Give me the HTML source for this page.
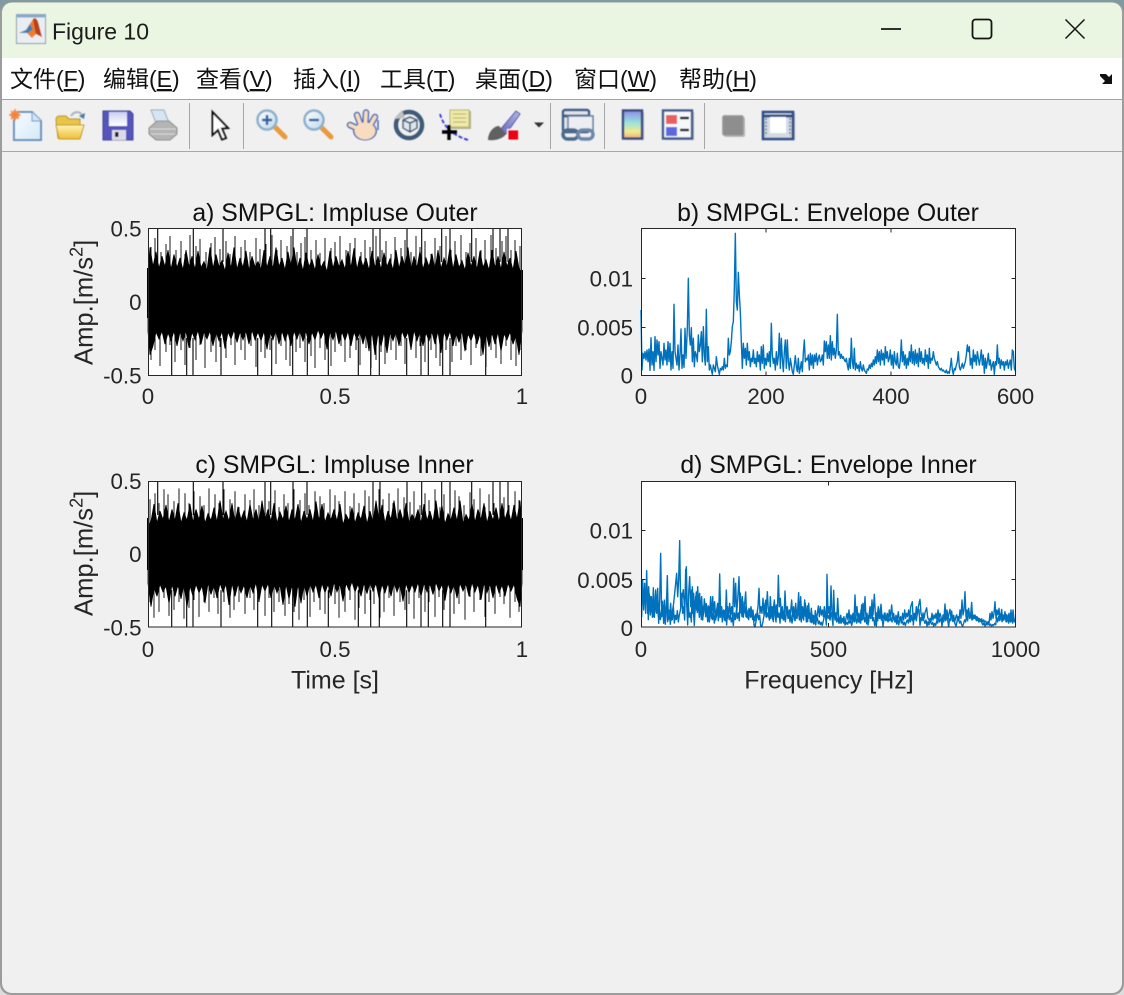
<!DOCTYPE html>
<html><head><meta charset="utf-8"><title>Figure 10</title>
<style>
html,body{margin:0;padding:0;background:#f0f0f0;width:1124px;height:995px;overflow:hidden}
svg{display:block}
text{font-family:"Liberation Sans","Noto Sans CJK SC",sans-serif}
.t{font-size:24.8px;fill:#111;text-anchor:middle}
.k{font-size:22.3px;fill:#262626}
.m{font-size:23px;fill:#111}
.e{text-anchor:end}
.c{text-anchor:middle}
.l{font-size:25px;fill:#262626;text-anchor:middle}
.tr{fill:none;stroke:#0072bd;stroke-width:4.2;stroke-linejoin:round}
</style></head><body>
<svg width="1124" height="995" viewBox="0 0 1124 995" xmlns="http://www.w3.org/2000/svg">
<defs>
<filter id="soft" x="-5%" y="-5%" width="110%" height="110%"><feGaussianBlur stdDeviation=".45"/></filter>
<clipPath id="dclip"><rect x="213" y="90" width="1124" height="445"/></clipPath>
<linearGradient id="cb" x1="0" y1="0" x2="0" y2="1"><stop offset="0" stop-color="#8d8de8"/><stop offset=".45" stop-color="#9ce4dc"/><stop offset=".75" stop-color="#f4e890"/><stop offset="1" stop-color="#ecb070"/></linearGradient>
<linearGradient id="fo" x1="0" y1="0" x2="0" y2="1"><stop offset="0" stop-color="#fff4b4"/><stop offset="1" stop-color="#eebe34"/></linearGradient>
<linearGradient id="lens" x1="0" y1="0" x2="1" y2="1"><stop offset="0" stop-color="#fff"/><stop offset="1" stop-color="#bcd8ec"/></linearGradient>
<linearGradient id="lab" x1="0" y1="0" x2="0" y2="1"><stop offset="0" stop-color="#ccd0f0"/><stop offset="1" stop-color="#fff"/></linearGradient>
<linearGradient id="doc" x1="0" y1="0" x2="1" y2="1"><stop offset="0" stop-color="#f8fcff"/><stop offset="1" stop-color="#d4e8f8"/></linearGradient>
<linearGradient id="bh" x1="1" y1="0" x2="0" y2="1"><stop offset="0" stop-color="#b4b8e8"/><stop offset="1" stop-color="#6268b8"/></linearGradient>
<g id="band">
<path transform="translate(0 301.800) scale(1 .88) translate(0 -301.800)" fill="#000" stroke="#000" stroke-width=".8" d="M148,268 150,240 153,262 156,245 159,264 162,250 165,262 168,243 171,265 174,248 177,263 180,252 183,266 186,243 189,262 192,250 195,265 198,244 201,263 204,256 207,266 210,240 213,264 216,248 219,262 222,255 225,267 228,246 231,264 234,240 237,265 240,252 243,263 246,244 249,266 252,250 255,262 258,256 261,265 264,243 267,263 270,250 273,264 276,240 279,262 282,252 285,266 288,245 291,263 294,240 297,265 300,252 303,267 306,246 309,262 312,254 315,266 318,248 321,263 324,256 327,268 330,244 333,264 336,250 339,262 342,254 345,265 348,244 351,263 354,241 357,265 360,250 363,262 366,252 369,266 372,244 375,263 378,250 381,265 384,246 387,262 390,253 393,266 396,243 399,264 402,250 405,262 408,240 411,266 414,250 417,263 420,244 423,265 426,252 429,262 432,247 435,266 438,243 441,264 444,252 447,262 450,240 453,265 456,248 459,263 462,255 465,266 468,246 471,262 474,250 477,265 480,244 483,263 486,254 489,266 492,243 495,263 498,250 501,265 504,245 507,262 510,252 513,266 516,244 519,264 522,268 522,335 519,362 516,340 513,350 510,336 507,345 504,338 501,358 498,336 495,350 492,337 489,353 486,336 483,362 480,338 477,350 474,336 471,346 468,338 465,358 462,335 459,348 456,337 453,352 450,335 447,345 444,336 441,360 438,335 435,350 432,336 429,346 426,337 423,352 420,336 417,346 414,334 411,356 408,336 405,344 402,335 399,352 396,336 393,346 390,337 387,360 384,336 381,353 378,337 375,362 372,336 369,358 366,336 363,350 360,335 357,345 354,336 351,352 348,335 345,346 342,336 339,350 336,334 333,345 330,336 327,356 324,335 321,343 318,333 315,345 312,336 309,350 306,335 303,347 300,334 297,344 294,335 291,352 288,336 285,346 282,335 279,350 276,334 273,345 270,336 267,356 264,335 261,346 258,336 255,345 252,334 249,350 246,335 243,345 240,336 237,348 234,334 231,344 228,336 225,355 222,335 219,346 216,336 213,352 210,335 207,344 204,336 201,350 198,334 195,345 192,336 189,354 186,335 183,346 180,336 177,352 174,335 171,346 168,337 165,350 162,335 159,344 156,336 153,352 150,362 148,335Z"/>
<path fill="none" stroke="#000" stroke-width=".9" d="M151 247V272M155 238V272M161 252V272M166 244V272M170 236V272M176 250V272M181 241V272M185 254V272M190 235V272M196 246V272M200 239V272M206 252V272M211 243V272M215 237V272M220 249V272M226 241V272M230 254V272M235 236V272M241 247V272M245 240V272M250 252V272M256 238V272M260 249V272M266 244V272M272 235V272M277 250V272M281 240V272M287 246V272M291 236V272M297 252V272M301 243V272M305 237V272M311 250V272M316 240V272M320 253V272M325 238V272M331 248V272M335 242V272M340 236V272M346 250V272M350 243V272M355 238V272M361 252V272M365 240V272M370 247V272M376 236V272M382 250V272M386 241V272M391 254V272M395 237V272M401 248V272M405 240V272M411 252V272M416 236V272M420 247V272M425 241V272M431 254V272M435 238V272M440 246V272M446 236V272M451 250V272M455 241V272M461 235V272M466 252V272M470 243V272M476 238V272M481 250V272M485 240V272M491 235V272M496 248V272M502 241V272M506 236V272M511 250V272M515 240V272M520 246V272M151 332V360M155 332V350M160 332V366M166 332V352M170 332V345M175 332V362M181 332V350M185 332V365M190 332V348M196 332V360M200 332V345M205 332V368M211 332V352M216 332V362M220 332V347M226 332V358M231 332V345M235 332V365M241 332V350M245 332V360M251 332V346M256 332V367M261 332V352M265 332V358M270 332V350M276 332V364M281 332V346M286 332V360M290 332V366M296 332V352M300 332V348M305 332V362M311 332V356M315 332V368M320 332V348M325 332V360M331 332V366M335 332V352M341 332V346M345 332V362M350 332V358M356 332V350M360 332V365M366 332V348M371 332V368M376 332V360M381 332V352M385 332V364M391 332V350M396 332V360M401 332V346M405 332V364M411 332V350M416 332V358M420 332V346M425 332V362M431 332V350M436 332V358M440 332V366M446 332V350M452 332V362M456 332V346M461 332V360M466 332V350M471 332V365M476 332V348M481 332V356M486 332V367M491 332V350M496 332V358M501 332V364M506 332V346M511 332V360M516 332V366M520 332V350"/>
</g>
<path id="spikes" fill="none" stroke="#000" stroke-width="1.100" d="M157.700 228V262M193.300 228V262M223 228V262M265 228V262M270.700 228V262M293 228V262M307 228V262M373 228V262M380 228V262M407 228V262M421.700 228V262M441.700 228V262M450 228V262M471.700 228V262M493 228V262M500 228V262M508 228V262M171.700 338V375M186.700 338V375M193 338V375M221 338V375M257.700 338V375M271.700 338V375M292.700 338V375M307.300 338V375M328.300 338V375M358.300 338V375M370.700 338V375M379.300 338V375M406.700 338V375M421 338V375M428.300 338V375M442.700 338V375M450 338V375M485.700 338V375"/>
</defs>

<!-- window -->
<rect width="1124" height="995" fill="#7f9aa0"/>
<rect y="970" width="1124" height="25" fill="#dcdcdc"/>
<rect x="0" y="2" width="1124" height="993" rx="11" fill="#9c9c9c"/>
<path d="M12 2.500H1112a10 10 0 0 1 10 10V58H2V12.500a10 10 0 0 1 10-10Z" fill="#eaf6e2"/>
<rect x="2" y="58" width="1120" height="41" fill="#fff"/>
<rect x="2" y="99" width="1120" height="1" fill="#a3a3a3"/>
<path d="M2 100H1122V983a10 10 0 0 1-10 10H12a10 10 0 0 1-10-10Z" fill="#f0f0f0"/>
<rect x="2" y="151" width="1120" height="1" fill="#a8a8a8"/>

<!-- title bar -->
<g filter="url(#soft)">
<rect x="16.500" y="14.500" width="29" height="29" fill="#e9eef2" stroke="#8a9aa6"/>
<rect x="16" y="14" width="30" height="3.500" fill="#8aa8c8"/>
<path d="M19 33l7-3 7-11c2-2 4 0 5 3l4 15-6-3-4 4-5-5Z" fill="#ef7d22"/>
<path d="M19 33l7-3 4-6 3 5-5 4Z" fill="#3c7fb8"/>
<path d="M33 19c2-2 4 0 5 3l4 15-6-3Z" fill="#b8401e"/>
</g>
<text x="52" y="39.500" font-size="23" fill="#1c1c1c" textLength="97">Figure 10</text>
<path d="M881 29H901" stroke="#151515" stroke-width="1.800"/>
<rect x="972.500" y="19.500" width="19" height="19" rx="3" fill="none" stroke="#151515" stroke-width="1.800"/>
<path d="M1065.500 19.500L1084.500 38.500M1084.500 19.500L1065.500 38.500" stroke="#151515" stroke-width="1.500"/>

<!-- menu -->
<text class="m" x="10" y="87">文件(<tspan text-decoration="underline">F</tspan>)</text>
<text class="m" x="103" y="87">编辑(<tspan text-decoration="underline">E</tspan>)</text>
<text class="m" x="196" y="87">查看(<tspan text-decoration="underline">V</tspan>)</text>
<text class="m" x="293" y="87">插入(<tspan text-decoration="underline">I</tspan>)</text>
<text class="m" x="380" y="87">工具(<tspan text-decoration="underline">T</tspan>)</text>
<text class="m" x="475" y="87">桌面(<tspan text-decoration="underline">D</tspan>)</text>
<text class="m" x="574" y="87">窗口(<tspan text-decoration="underline">W</tspan>)</text>
<text class="m" x="679" y="87">帮助(<tspan text-decoration="underline">H</tspan>)</text>
<path d="M1100 74h6l3 3 3-3v10h-10l3-3-5-5Z" fill="#111"/>

<!-- toolbar separators -->
<path d="M189.500 103V149M243.500 103V149M550.500 103V149M604.500 103V149M704.500 103V149" stroke="#a6a6a6" stroke-width="1"/>

<g filter="url(#soft)">
<!-- new -->
<path d="M14 112H32L41 121V140H14Z" fill="url(#doc)" stroke="#6a90bc" stroke-width="2"/>
<path d="M32 112V121H41" fill="#cfe4f4" stroke="#6a90bc"/>
<circle cx="15" cy="115" r="4.500" fill="#f59a4a"/>
<path d="M9 115H21M15 109V121M11 111L19 119M19 111L11 119" stroke="#f08040" stroke-width="1.200"/>
<!-- open -->
<path d="M56 120Q56 116 60 116H66L69 119H80V138H58Z" fill="#e8c448" stroke="#b89428"/>
<path d="M56 125H84L80 139H59Z" fill="url(#fo)" stroke="#c09a28" stroke-linejoin="round"/>
<path d="M71 116C74 111 80 111 82 115" fill="none" stroke="#a8b4c4" stroke-width="2"/>
<path d="M85 113L84 119 79 116Z" fill="#4878a8"/>
<!-- save -->
<path d="M103 111H130L133 114V140H103Z" fill="#5555bc" stroke="#3c4890"/>
<rect x="109" y="112" width="18" height="14" fill="url(#lab)"/>
<rect x="112" y="130" width="14" height="10" fill="#dcdce8"/>
<rect x="115" y="132" width="3.500" height="5" fill="#222"/>
<!-- print -->
<path d="M151 110H164L169 123H156Z" fill="#d4e6f4" stroke="#9aa8b4"/>
<path d="M149 128L157 121H169L177 128V134L170 140H156L149 134Z" fill="#b4b4b4" stroke="#8c8c8c"/>
<path d="M150 129H176M151 134H175" stroke="#dcdcdc"/>
<!-- arrow -->
<path d="M212.500 112V135L218 130 222 139.500 226 138 222 128.500 228 128Z" fill="#fff" stroke="#111" stroke-width="2"/>
<!-- zoom in -->
<path d="M275 127L285 137" stroke="#e89a3c" stroke-width="5" stroke-linecap="round"/>
<circle cx="267" cy="120" r="9.500" fill="url(#lens)" stroke="#8cb0cc" stroke-width="2.500"/>
<path d="M262 120H272M267 115V125" stroke="#2f5f9c" stroke-width="2.400"/>
<!-- zoom out -->
<path d="M321 127L331 137" stroke="#e89a3c" stroke-width="5" stroke-linecap="round"/>
<circle cx="314" cy="120" r="9.500" fill="url(#lens)" stroke="#8cb0cc" stroke-width="2.500"/>
<path d="M309 120H319" stroke="#2f5f9c" stroke-width="2.400"/>
<!-- hand -->
<path d="M363 131L350 125M363 131L357 115M365 131L366 112.500M367 131L375 117" stroke="#4c6cb0" stroke-width="6.500" stroke-linecap="round"/>
<ellipse cx="365" cy="131" rx="12" ry="9.500" fill="#4c6cb0"/>
<path d="M363 131L350 125M363 131L357 115M365 131L366 112.500M367 131L375 117" stroke="#f8dcc0" stroke-width="3.600" stroke-linecap="round"/>
<ellipse cx="365" cy="131" rx="10.500" ry="8.500" fill="#f8dcc0"/>
<path d="M378 120V130" stroke="#4c6cb0" stroke-width="1.500"/>
<!-- rotate -->
<circle cx="409" cy="125" r="13" fill="#f0f0f0" stroke="#3c5a78" stroke-width="4.500"/>
<path d="M394 119L402 110 405 118Z" fill="#c0c0c0"/>
<path d="M403 120L410 117 417 120V128L410 132 403 128ZM403 120L410 123 417 120M410 123V132" fill="#dfe6ea" stroke="#3c5a78" stroke-width="1.500"/>
<!-- data cursor -->
<rect x="451" y="111" width="20" height="18" fill="#b4b488"/>
<rect x="450" y="110" width="19" height="17" fill="#efe9a4" stroke="#b4b47c"/>
<path d="M453 114H466M453 118H466M453 122H466" stroke="#b0b080"/>
<path d="M440 114C443 124 449 134 468 140" fill="none" stroke="#3434d8" stroke-width="1.800" stroke-dasharray="4 2"/>
<path d="M442 132H457M449 125V140" stroke="#000" stroke-width="3.400"/>
<!-- brush -->
<path d="M500 130L516 111 520 114 506 134Z" fill="url(#bh)" stroke="#5458a0"/>
<path d="M488 140C488 132 494 126 499 126L506 134C503 139 494 141 488 140Z" fill="#606060"/>
<rect x="507" y="129" width="12" height="12" fill="#fff"/>
<rect x="508" y="130" width="10.500" height="10" fill="#f00014"/>
<path d="M534 122.500H544L539 127.500Z" fill="#333"/>
<!-- link -->
<rect x="563" y="110" width="26" height="22" rx="2" fill="#dfe4ea" stroke="#3f5c88" stroke-width="2.400"/>
<path d="M563 116H589" stroke="#3f5c88" stroke-width="3"/>
<rect x="568" y="116" width="25" height="15" fill="#eceef2" stroke="#5f7c9c" stroke-width="1.500"/>
<rect x="563" y="130" width="15" height="9" rx="4.500" fill="none" stroke="#4c6a8c" stroke-width="3.400"/>
<rect x="578" y="130" width="15" height="9" rx="4.500" fill="none" stroke="#6c88a8" stroke-width="3.400"/>
<!-- colorbar -->
<rect x="625" y="112" width="19" height="28" fill="#aab0bc"/>
<rect x="623" y="110.500" width="19" height="28" fill="url(#cb)" stroke="#3a4a80" stroke-width="2.400"/>
<!-- legend -->
<rect x="665" y="112" width="29" height="28" fill="#aab0bc"/>
<rect x="663" y="110.500" width="29" height="28" fill="#f6f8fc" stroke="#3f5a88" stroke-width="2.400"/>
<rect x="666" y="115" width="11" height="9" fill="#e86060"/>
<rect x="666" y="127" width="11" height="9" fill="#5c68e0"/>
<path d="M680 118H689M680 130H689" stroke="#222" stroke-width="2.400"/>
<!-- plot box gray -->
<rect x="724" y="117" width="21" height="20" rx="2" fill="#b8b8b8"/>
<rect x="722.500" y="115.500" width="21" height="20" rx="2" fill="#8e8e8e" stroke="#a8a8a8"/>
<!-- plot tools -->
<rect x="765" y="113" width="30" height="27" fill="#aab0bc"/>
<rect x="763" y="112" width="30" height="27" fill="#d4dbe4" stroke="#2f4f88" stroke-width="2.600"/>
<path d="M763 116H793" stroke="#2f4f88" stroke-width="3"/>
<rect x="770" y="117" width="16" height="16" fill="#fff"/>
<path d="M766 118V136M790 118V136" stroke="#8090a8" stroke-width="2" stroke-dasharray="2 1.500"/>
</g>

<!-- PLOT A -->
<rect x="148.500" y="228.500" width="373" height="147" fill="#fff"/>
<use href="#spikes"/><use href="#band"/>
<rect x="147" y="268" width="2" height="50" fill="#000"/><rect x="521" y="270" width="2" height="50" fill="#000"/>
<rect x="148.500" y="228.500" width="373" height="147" fill="none" stroke="#262626"/>
<text class="t" x="335" y="221">a) SMPGL: Impluse Outer</text>
<text class="k e" x="141.500" y="236.500">0.5</text>
<text class="k e" x="141.500" y="310">0</text>
<text class="k e" x="141.500" y="383.500">-0.5</text>
<text class="k c" x="148" y="404">0</text><text class="k c" x="335" y="404">0.5</text><text class="k c" x="522" y="404">1</text>
<text x="0" y="0" font-size="25.600" fill="#262626" transform="translate(92.500 365) rotate(-90)">Amp.[m/s<tspan dy="-10" font-size="18">2</tspan><tspan dy="10">]</tspan></text>

<!-- PLOT C -->
<rect x="148.500" y="481.500" width="373" height="145.500" fill="#fff"/>
<g transform="translate(0 256.050) scale(1 .9884)"><use href="#spikes"/></g>
<g transform="translate(670 256.050) scale(-1 .9884)"><use href="#band"/></g>
<rect x="147" y="518" width="2" height="52" fill="#000"/><rect x="521" y="518" width="2" height="52" fill="#000"/>
<rect x="148.500" y="481.500" width="373" height="145.500" fill="none" stroke="#262626"/>
<text class="t" x="334.500" y="473">c) SMPGL: Impluse Inner</text>
<text class="k e" x="141.500" y="489">0.5</text>
<text class="k e" x="141.500" y="562">0</text>
<text class="k e" x="141.500" y="635.500">-0.5</text>
<text class="k c" x="148" y="657">0</text><text class="k c" x="335" y="657">0.5</text><text class="k c" x="522" y="657">1</text>
<text x="0" y="0" font-size="25.600" fill="#262626" transform="translate(92.500 616) rotate(-90)">Amp.[m/s<tspan dy="-10" font-size="18">2</tspan><tspan dy="10">]</tspan></text>
<text class="l" x="335" y="688.500">Time [s]</text>

<!-- PLOT B -->
<rect x="641.500" y="228.500" width="374" height="147" fill="#fff"/>
<g transform="translate(570 195) scale(.33333)">
<polyline class="tr" points="213,345 216,525 219,475 222,490 225,470 228,495 231,465 234,500 237,462 240,526 243,428 246,510 249,470 252,526 255,425 258,500 261,435 264,480 267,440 270,520 273,470 276,490 279,510 282,445 285,495 288,465 291,510 294,440 297,500 300,445 303,525 306,470 309,520 312,328 315,470 318,490 321,510 324,450 327,525 330,480 333,402 336,520 339,480 342,517 345,400 348,490 352,400 355,250 358,420 361,450 364,398 367,500 370,430 373,515 376,470 379,480 382,500 385,420 388,470 391,450 394,410 397,500 400,395 403,480 406,510 409,343 412,500 415,455 418,525 421,510 424,525 427,538 430,510 433,520 436,530 439,485 442,510 445,525 448,538 451,520 454,525 457,515 460,525 463,490 466,520 469,510 472,515 475,430 478,480 481,470 484,440 487,395 490,380 493,282 496,115 499,320 502,345 505,232 508,300 511,350 514,440 517,520 520,445 523,490 526,460 529,510 532,445 535,495 538,470 541,515 544,490 547,500 550,465 553,505 556,490 559,515 562,470 565,500 568,480 571,525 574,455 577,505 580,450 583,520 586,490 589,510 592,475 595,500 598,470 601,515 604,385 607,480 610,505 613,490 616,525 619,470 622,510 625,485 628,415 631,520 634,430 637,490 640,530 643,470 646,435 649,520 652,435 655,500 658,525 661,490 664,510 667,530 670,538 673,510 676,482 679,515 682,530 685,490 688,535 691,520 694,500 697,530 700,475 703,435 706,500 709,490 712,495 715,480 718,525 721,475 724,510 727,480 730,520 733,480 736,500 739,475 742,510 745,490 748,480 751,500 754,495 757,480 760,510 763,438 766,470 769,440 772,490 775,450 778,490 781,422 784,495 787,440 790,480 793,460 796,490 799,465 802,358 805,480 808,470 811,490 814,478 817,490 820,485 823,495 826,500 829,490 832,510 835,525 838,490 841,520 844,430 847,500 850,520 853,460 856,525 859,505 862,520 865,510 868,530 871,500 874,520 877,528 880,510 883,525 886,530 889,535 892,522 895,525 898,510 901,520 904,505 907,515 910,495 913,510 916,485 919,505 922,465 925,500 928,470 931,510 934,465 937,495 940,475 943,510 946,455 949,490 952,470 955,500 958,490 961,465 964,510 967,480 970,520 973,470 976,500 979,510 982,475 985,515 988,520 991,495 994,435 997,500 1000,470 1003,510 1006,480 1009,520 1012,490 1015,510 1018,470 1021,500 1024,450 1027,505 1030,470 1033,510 1036,465 1039,505 1042,475 1045,515 1048,460 1051,500 1054,470 1057,505 1060,490 1063,510 1066,465 1069,500 1072,480 1075,520 1078,460 1081,505 1084,490 1087,495 1090,470 1093,490 1096,500 1099,510 1102,500 1105,515 1108,520 1111,525 1114,520 1117,528 1120,525 1123,530 1126,533 1129,525 1132,535 1135,530 1138,535 1141,515 1144,490 1147,525 1150,538 1153,520 1156,525 1159,510 1162,500 1165,470 1168,515 1171,525 1174,515 1177,505 1180,520 1183,510 1186,500 1189,480 1192,450 1195,470 1198,455 1201,510 1204,490 1207,520 1210,465 1213,500 1216,480 1219,510 1222,470 1225,490 1228,510 1231,490 1234,465 1237,510 1240,480 1243,535 1246,490 1249,520 1252,500 1255,475 1258,510 1261,495 1264,525 1267,510 1270,500 1273,538 1276,500 1279,510 1282,450 1285,505 1288,490 1291,520 1294,495 1297,510 1300,500 1303,525 1306,500 1309,510 1312,495 1315,520 1318,505 1321,495 1324,525 1327,465 1330,470 1333,520 1337,530"/>
</g>
<rect x="641.500" y="228.500" width="374" height="147" fill="none" stroke="#262626"/>
<path d="M766 228.500v4M891 228.500v4M766 375.500v-4M891 375.500v-4M641.500 278.500h4M641.500 327.500h4M1015.500 278.500h-4M1015.500 327.500h-4" stroke="#262626"/>
<text class="t" x="828" y="221">b) SMPGL: Envelope Outer</text>
<text class="k e" x="633" y="286.500">0.01</text>
<text class="k e" x="633" y="335.500">0.005</text>
<text class="k e" x="633" y="383.500">0</text>
<text class="k c" x="641" y="404">0</text><text class="k c" x="766" y="404">200</text><text class="k c" x="891" y="404">400</text><text class="k c" x="1015.500" y="404">600</text>

<!-- PLOT D -->
<rect x="641.500" y="481.500" width="374" height="145.500" fill="#fff"/>
<g transform="translate(570 450) scale(.33333)">
<g clip-path="url(#dclip)">
<use href="#dtrace" transform="translate(20 531) scale(1 .7) translate(0 -531)"/>
<polyline id="dtrace" class="tr" points="213,410 215,500 218,390 221,480 224,400 227,490 230,362 233,490 236,410 239,470 242,440 245,485 248,450 251,500 254,470 257,420 260,490 263,415 266,520 269,450 272,310 275,500 278,470 281,520 284,470 287,500 290,440 293,515 296,480 299,500 302,460 305,510 308,480 311,460 314,430 317,400 320,370 323,440 326,390 329,272 332,470 335,430 338,490 341,470 344,510 347,358 350,460 353,525 356,430 359,380 362,470 365,420 368,490 371,430 374,500 377,440 380,480 383,410 386,470 389,430 392,490 395,440 398,510 401,480 404,455 407,500 410,470 413,515 416,470 419,490 422,440 425,505 428,440 431,490 434,455 437,510 440,480 443,460 446,505 449,372 452,495 455,470 458,500 461,480 464,510 467,490 470,525 473,470 476,500 479,460 482,495 485,470 488,505 491,385 494,470 497,400 500,490 503,450 507,380 510,490 513,470 516,500 519,455 522,490 525,470 528,500 531,480 534,505 537,475 540,495 543,470 546,500 549,480 552,525 555,531 558,515 561,490 564,470 567,415 570,490 573,470 576,490 579,445 582,495 585,460 588,500 592,425 595,480 598,510 601,440 604,490 607,470 610,515 613,450 616,495 619,465 622,500 625,376 628,470 631,445 634,495 637,470 640,510 643,480 646,515 649,490 652,470 655,505 658,480 661,495 665,450 668,500 671,470 674,510 677,460 680,495 683,480 686,428 689,510 692,440 695,495 698,470 701,510 704,450 707,500 710,480 713,515 716,460 719,505 722,490 725,518 728,505 731,522 734,510 737,525 740,505 743,485 745,468 748,500 751,470 754,495 757,480 760,500 763,470 766,490 769,525 771,373 774,490 777,470 780,510 783,408 786,490 789,505 792,480 795,510 798,495 801,515 804,505 807,520 810,510 813,520 816,505 819,515 822,500 825,525 828,505 831,490 834,510 837,480 840,515 843,495 846,510 849,490 852,515 855,435 858,500 861,470 864,510 867,490 870,518 873,480 876,510 879,460 882,495 885,440 888,505 891,490 894,525 897,500 900,470 903,505 906,450 909,495 913,433 916,490 919,528 922,495 925,470 928,505 931,490 934,510 937,495 940,505 943,490 946,510 949,500 952,490 955,510 958,480 961,505 965,465 968,505 971,490 974,515 977,505 980,522 983,510 986,525 989,510 992,500 995,515 998,490 1001,510 1004,480 1007,505 1010,490 1013,500 1016,480 1019,505 1022,470 1027,455 1030,525 1033,490 1036,505 1039,470 1042,495 1045,470 1050,448 1053,490 1056,500 1059,505 1062,512 1065,520 1068,510 1071,528 1074,515 1077,525 1080,505 1083,515 1086,490 1089,510 1092,495 1095,505 1098,490 1101,510 1104,480 1107,505 1110,490 1113,500 1116,530 1119,495 1122,505 1125,462 1128,505 1131,480 1134,510 1137,490 1140,478 1143,505 1146,500 1149,515 1152,505 1155,522 1158,528 1161,515 1164,500 1167,510 1170,480 1173,505 1176,450 1179,495 1182,480 1185,425 1188,500 1191,480 1194,495 1197,485 1200,505 1203,490 1206,510 1209,495 1212,505 1215,495 1218,510 1221,500 1224,510 1227,505 1230,515 1233,510 1236,520 1239,525 1242,518 1245,528 1248,520 1251,525 1254,515 1257,522 1260,490 1263,510 1266,485 1269,505 1272,490 1275,455 1278,505 1281,480 1284,495 1287,475 1290,510 1293,490 1296,515 1299,495 1302,510 1305,485 1308,515 1311,495 1314,510 1317,490 1320,512 1323,480 1326,515 1329,480 1332,510 1337,515"/>
</g>
</g>
<rect x="641.500" y="481.500" width="374" height="145.500" fill="none" stroke="#262626"/>
<path d="M828.500 481.500v4M828.500 627v-4M641.500 530.500h4M641.500 579.500h4M1015.500 530.500h-4M1015.500 579.500h-4" stroke="#262626"/>
<text class="t" x="828.500" y="473">d) SMPGL: Envelope Inner</text>
<text class="k e" x="633" y="538.500">0.01</text>
<text class="k e" x="633" y="588">0.005</text>
<text class="k e" x="633" y="636">0</text>
<text class="k c" x="641" y="657">0</text><text class="k c" x="828.500" y="657">500</text><text class="k c" x="1015.500" y="657">1000</text>
<text class="l" x="829" y="688.500">Frequency [Hz]</text>
</svg>
</body></html>
